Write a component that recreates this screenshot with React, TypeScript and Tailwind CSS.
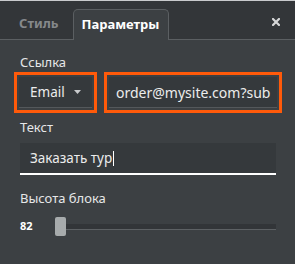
export default function App() {
  return (
    <div className="w-[295px] h-[264px] bg-[#3c4043] flex flex-col overflow-hidden font-['Noto_Sans',sans-serif] text-[#e6e7e8]">
      <div className="h-px bg-[#c9cbcd]" />
      {/* tabs */}
      <div className="relative h-[39px] bg-[#333639] border-b border-[#5b5f62] flex items-end pl-[19px]">
        <div className="h-[30px] flex items-center pr-[14px] text-[13px] font-bold text-[#85888b]">Стиль</div>
        <div className="h-[31px] w-[96px] -mb-px flex items-center justify-center rounded-t-[5px] border border-b-0 border-[#5b5f62] bg-[#3c4043] text-[13px] font-bold text-white">
          Параметры
        </div>
        <svg className="absolute right-[15px] top-[17px]" width="8" height="8" viewBox="0 0 8 8">
          <path d="M1 1L7 7M7 1L1 7" stroke="#d6d7d8" strokeWidth="2.2" strokeLinecap="square" />
        </svg>
      </div>

      {/* body */}
      <div className="flex flex-col pl-[20px] pr-[19px] pt-[14px]">
        <div className="text-[13px] leading-[16px]">Ссылка</div>
        <div className="flex gap-[7px] -ml-[6px] -mr-[6px] mt-[2px]">
          <div className="w-[83px] h-[41px] border-[3px] border-[#ff5a0a] p-[2px]">
            <div className="h-full bg-[#35393c] border-b border-[#54585b] flex items-center pl-[11px] gap-[9px] text-[13.5px] text-[#ececec]">
              Email
              <svg width="7" height="4" viewBox="0 0 7 4">
                <path d="M0 0H7L3.5 4Z" fill="#c9cbcd" />
              </svg>
            </div>
          </div>
          <div className="flex-1 h-[41px] border-[3px] border-[#ff5a0a] p-[2px]">
            <div className="h-full bg-[#35393c] border-b border-[#54585b] flex items-center pl-[7px] text-[14px] text-[#ececec]">
              order@mysite.com?sub
            </div>
          </div>
        </div>

        <div className="text-[13px] leading-[16px] mt-[6px]">Текст</div>
        <div className="mt-[8px] h-[32px] bg-[#35393c] border-b-2 border-white flex items-center pl-[10px] text-[13.5px] text-[#ececec]">
          Заказать тур
          <span className="ml-px w-px h-[15px] bg-white" />
        </div>

        <div className="text-[13px] leading-[16px] mt-[15px]">Высота блока</div>
        <div className="mt-[11px] flex items-center">
          <div className="w-[35px] text-[11px] font-bold text-white">82</div>
          <div className="w-[11px] h-[19px] rounded-[2px] bg-[#a7abac]" />
          <div className="flex-1 h-[6px] bg-[#323538] border-b border-[#5d6164]" />
        </div>
      </div>
    </div>
  );
}
